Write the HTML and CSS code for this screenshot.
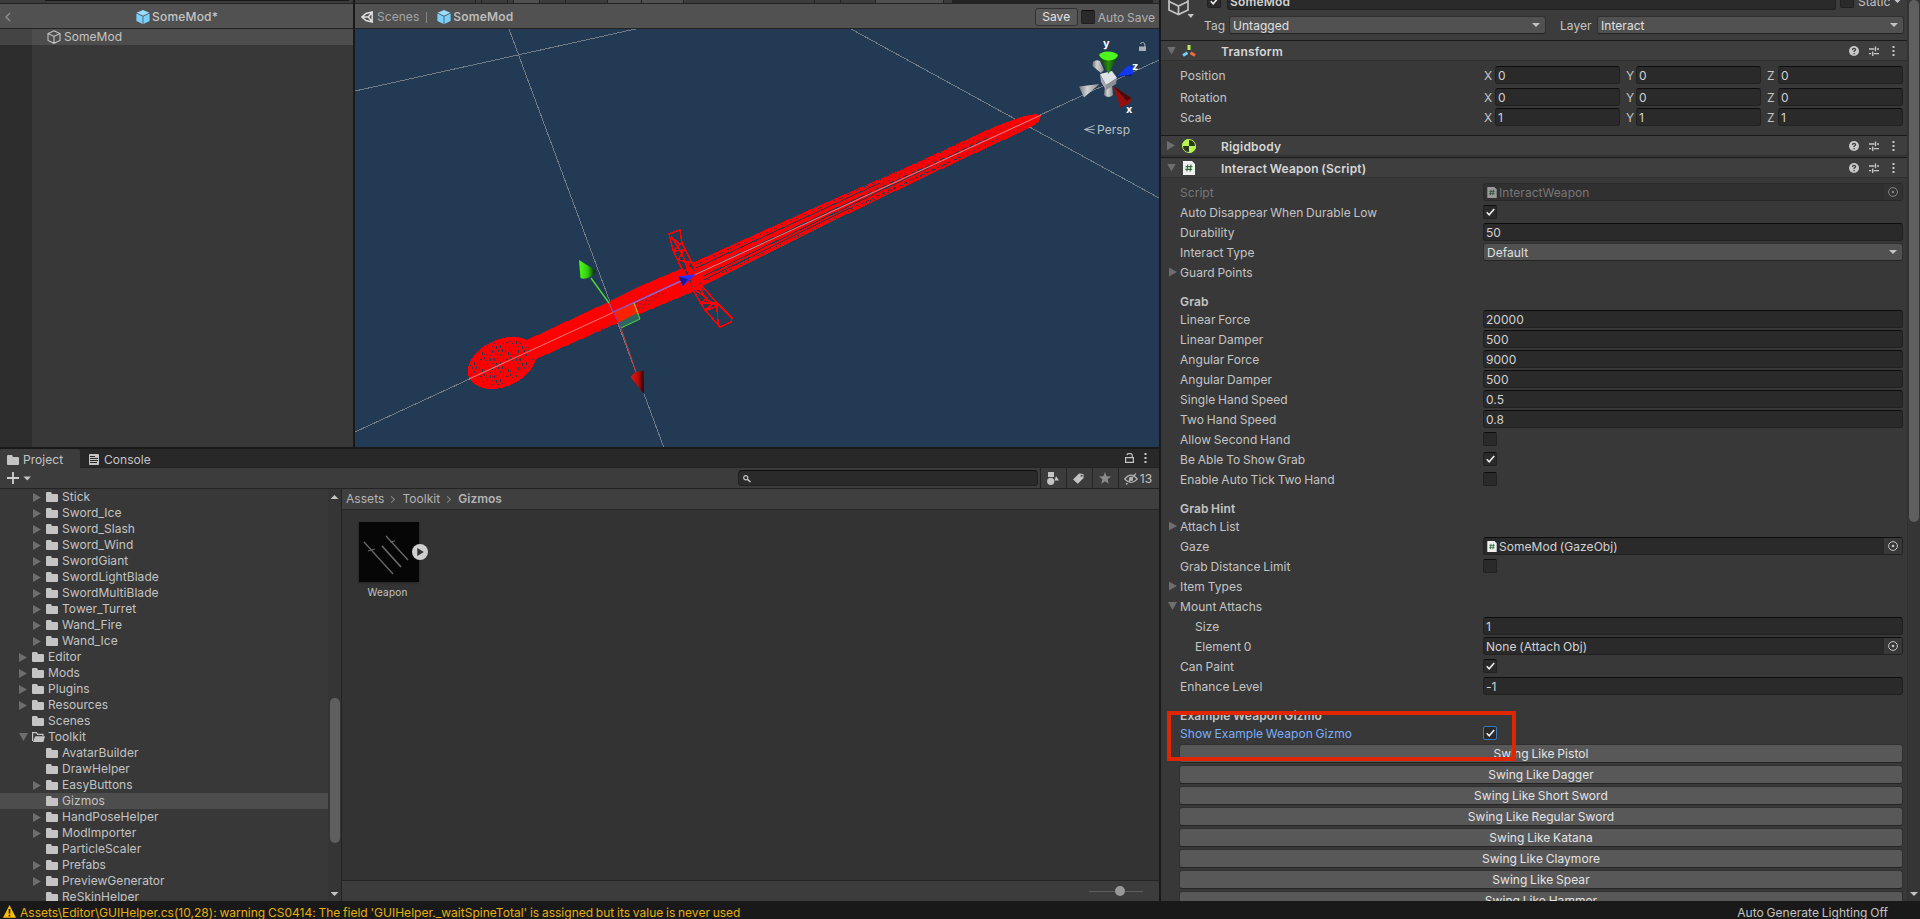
FILE: index.html
```html
<!DOCTYPE html>
<html lang="en">
<head>
<meta charset="utf-8">
<title>SomeMod</title>
<link rel="stylesheet" href="styles.css">
</head>
<body>
<svg class="defs" width="0" height="0">
  <defs>
    <symbol id="folder" viewBox="0 0 12 10"><path d="M0 1.2Q0 0 1 0H4.6Q5.4 0 5.6 1L5.8 2H11Q12 2 12 3V9Q12 10 11 10H1Q0 10 0 9Z" fill="#c4c4c4"/></symbol>
    <symbol id="folder-open" viewBox="0 0 13 10"><path d="M.6 9V.6H4.6L5.4 2.4H11V4" fill="none" stroke="#c4c4c4" stroke-width="1.2"/><path d="M3.2 4.2H13L11.4 10H1Z" fill="#c4c4c4"/></symbol>
    <symbol id="cube-blue" viewBox="0 0 14 14"><path d="M7 0L13.4 2.8 7 5.8 .6 2.8Z" fill="#9adcff"/><path d="M.4 3.6L6.6 6.5V14L.4 11ZM13.6 3.6L7.4 6.5V14L13.6 11Z" fill="#7bd0fb"/></symbol>
    <symbol id="cube" viewBox="0 0 14 14"><path d="M7 .8L13 3.6V10.4L7 13.3 1 10.4V3.6ZM1 3.6L7 6.4 13 3.6M7 6.4V13.3" fill="none" stroke="#c4c4c4" stroke-width="1.1"/></symbol>
    <symbol id="help" viewBox="0 0 10 10"><circle cx="5" cy="5" r="5" fill="#c8c8c8"/><path d="M3.4 3.9Q3.5 2.4 5 2.4T6.6 3.8Q6.6 4.6 5.1 5.1V6.1M5.1 7V8.2" fill="none" stroke="#3e3e3e" stroke-width="1.3"/></symbol>
    <symbol id="preset" viewBox="0 0 10 10"><path d="M0 3H5.4M8 3H10M6.5 .4V5.2M0 7.6H2.2M4.8 7.6H10M3.7 5.4V10" fill="none" stroke="#c8c8c8" stroke-width="1.3"/></symbol>
    <symbol id="dots" viewBox="0 0 3 10"><path d="M.5 0H2.5V2H.5ZM.5 4H2.5V6H.5ZM.5 8H2.5V10H.5Z" fill="#c8c8c8"/></symbol>
    <symbol id="script" viewBox="0 0 12 14"><path d="M0 0H9L12 3V14H0Z" fill="#f0f0f0"/><path d="M4.8 3.5L3.9 10.5M8 3.5L7.1 10.5M2.6 5.6H9.4M2.3 8.4H9.1" fill="none" stroke="#2a6b35" stroke-width="1.1"/></symbol>
    <symbol id="target" viewBox="0 0 10 10"><circle cx="5" cy="5" r="4.4" fill="none" stroke="#c4c4c4"/><circle cx="5" cy="5" r="1.3" fill="#c4c4c4"/></symbol>
    <symbol id="lock" viewBox="0 0 9 10"><path d="M.6 4.6H8.4V9.4H.6ZM2 2.2Q2 .6 3.6 .6H5.6Q7.2 .6 7.2 2.2V4.6" fill="none" stroke="#c4c4c4" stroke-width="1.2"/></symbol>
    <pattern id="speck" width="7" height="5" patternUnits="userSpaceOnUse" patternTransform="rotate(-30)"><path d="M0 0H1V2H0ZM3 2H4V4H3ZM5 0H6V1H5Z" fill="#233a54"/></pattern>
    <pattern id="mesh" width="13" height="17" patternUnits="userSpaceOnUse"><path d="M0 1H1V4H0ZM3 0H4V2H3ZM2 6H3V9H2ZM5 3H6V4H5ZM6 5H7V8H6ZM9 1H10V4H9ZM11 6H12V7H11ZM8 9H9V12H8ZM4 10H5V12H4ZM1 12H2V15H1ZM11 10H12V13H11ZM6 14H7V16H6ZM9 15H10V16H9ZM3 14H4V15H3ZM12 2H13V3H12Z" fill="#233a54"/></pattern>
    <linearGradient id="g-green"><stop offset="0" stop-color="#4dff1c"/><stop offset=".55" stop-color="#35c80c"/><stop offset="1" stop-color="#052604"/></linearGradient>
    <linearGradient id="g-red"><stop offset="0" stop-color="#ee1410"/><stop offset=".6" stop-color="#b00c0a"/><stop offset="1" stop-color="#260404"/></linearGradient>
    <linearGradient id="g-white"><stop offset="0" stop-color="#77797b"/><stop offset=".4" stop-color="#d0d2d4"/><stop offset="1" stop-color="#8a8c8f"/></linearGradient>
    <linearGradient id="g-dgreen"><stop offset="0" stop-color="#0c3a04"/><stop offset=".5" stop-color="#2b8a10"/><stop offset="1" stop-color="#0d3a05"/></linearGradient>
  </defs>
</svg>

<div class="editor">
  <div class="main">
    <div class="top">
      <section class="hierarchy">
        <div class="strip"><i class="strip-field"></i></div>
        <header class="bar">
          <svg class="back" width="6" height="10" viewBox="0 0 6 10"><path d="M5 1L1 5 5 9" fill="none" stroke="#8f8f8f" stroke-width="1.4"/></svg>
          <svg class="ico14"><use href="#cube-blue"/></svg><b>SomeMod*</b>
        </header>
        <div class="hier-body">
          <div class="hier-row"><svg class="ico14"><use href="#cube"/></svg><span>SomeMod</span></div>
        </div>
      </section>

      <section class="scene">
        <div class="strip scene-strip"></div>
        <header class="bar scene-bar">
          <svg width="12" height="12" viewBox="0 0 12 12"><path d="M11.2 1V11L5 9.6.8 6 5 2.4ZM1 6H7.2L11 1.4M7.2 6L11 10.6" fill="none" stroke="#dedede" stroke-width="1.5"/></svg>
          <span class="dim">Scenes</span><i class="pipe"></i>
          <svg class="ico14"><use href="#cube-blue"/></svg><b class="dimb">SomeMod</b>
          <button class="save">Save</button><i class="check big"></i><span class="autosave">Auto Save</span>
        </header>
        <svg class="view" width="804" height="419" viewBox="355 29 804 419">
          <g stroke="#717b86" stroke-width="1" fill="none" shape-rendering="crispEdges">
            <path d="M509 29L664 448M355 91L640 28M851 29L1159 198M355 432L1159 60"/>
          </g>
          <g shape-rendering="crispEdges">
            <g fill="#f00">
              <ellipse cx="502" cy="363" rx="36" ry="23.5" transform="rotate(-24 502 363)"/>
              <path d="M520 343L529 339 606 303 638 287 683 268 697 290 618 323 536 359Z"/>
              <path d="M690 264L816 207 907 167 994 127 1021 117 1035 114 1041 115 1039 122 1025 130 954 163 835 220 709 283 696 288Z"/>
            </g>
            <path d="M470 366Q476 350 490 344L516 340 526 346 534 358Q528 372 512 380 490 390 478 382 468 376 470 366Z" fill="url(#mesh)"/>
            <path d="M575 366L572 363 600 347 606 352ZM630 310L632 302 660 288 665 294 640 311ZM585 335L615 322 618 327 585 345Z" fill="url(#speck)" opacity=".7"/>
            <path d="M870 184L994 129 1030 119 1030 126 954 161 850 211Z" fill="url(#speck)" opacity=".45"/>
            <g fill="none" stroke="#233a54" stroke-width="1">
              <path d="M696 268L880 183M698 273L860 197"/>
              <path d="M704 276L930 167M704 280L850 208"/>
              <path d="M695 265L960 143" stroke-dasharray="1 2"/>
              <path d="M708 280L1000 138" stroke-dasharray="1 3"/>
              <path d="M860 197L990 137" stroke-dasharray="5 3"/>
              <path d="M850 209L960 157" stroke-dasharray="3 3"/>
            </g>
            <path d="M670 236L680 232 683 244 694 266 704 287 717 304 731 319 720 326 705 310 694 290 683 267 674 250Z" fill="#233a54"/>
            <path d="M684 262L696 272 703 290 694 290Z" fill="#f00"/>
            <path d="M669 234L680 230 682 243 693 265 703 287 717 303 732 318 731 322 720 327 705 310 693 290 681 267 673 250ZM671 237L680 244 674 251 684 250 678 260 690 262 686 270 697 274M673 239L681 252 692 276M695 290L707 298 701 303 713 303 705 311 717 306 718 324M700 289L707 300 717 305" fill="none" stroke="#f00" stroke-width="1.6"/>
          </g>
          <path d="M469 379L1041 115" stroke="#e47880" stroke-width="1.1"/>
          <path d="M613 312L634 303 640 319 621 328Z" fill="#ff2600" fill-opacity=".9"/>
          <path d="M618 323L637 313 640 319 621 328Z" fill="#2c665c"/>
          <path d="M634 303L640 319 621 328" fill="none" stroke="#4edb3c"/>
          <path d="M634 303L638 314" stroke="#c6b320"/>
          <path d="M591 278L609 303" stroke="#4edb3c" stroke-width="1.3"/><path d="M609 303L613 312" stroke="#c78b6a"/>
          <path d="M613 312L680 281" stroke="#7655e8" stroke-width="1.3"/>
          <path d="M609 303L621 328" stroke="#8c37b0"/>
          <path d="M621 328L636 372" stroke="#c43838"/>
          <path d="M579 260L595 270Q596 274 590 277T580.5 278Z" fill="url(#g-green)"/>
          <path d="M630.6 377Q635 370 643.6 371L644 394Z" fill="url(#g-red)"/>
          <path d="M696 274L678.500 276.500 683 286Z" fill="#2b2fff"/><path d="M678.500 276.500L688 279 683 286Z" fill="#171a99"/>
          <g class="gizmo">
            <path d="M1093 62Q1096 59 1100 61L1104 70 1101 73 1092.500 66Z" fill="url(#g-white)"/>
            <path d="M1079 86.500L1099.500 84 1084 97.500Z" fill="url(#g-white)"/>
            <path d="M1105 85H1112L1113 95Q1108.500 99 1104 95Z" fill="url(#g-white)"/>
            <path d="M1100 74L1112 71 1117 78 1106 85Z" fill="#dfe2e8"/>
            <path d="M1100 74L1106 85 1106 90 1101 82Z" fill="#a6a9ae"/><path d="M1106 85L1117 78 1116 84 1106 90Z" fill="#8b8e93"/>
            <path d="M1099.500 57L1108.500 74 1117.500 57Z" fill="url(#g-dgreen)"/><path d="M1099 55Q1101 51.500 1108 51.500T1118 55Q1117 60 1108.500 60.500 1101 60 1099 55Z" fill="#4ef41e"/>
            <path d="M1117 76.500L1128 65.500 1133.500 67 1133 74Z" fill="#1238f5"/><path d="M1117 76.500L1133 74 1131 76Z" fill="#0c1f86"/>
            <path d="M1113 86L1131.500 98 1130 103 1120.500 107.500Z" fill="#95100c"/><path d="M1113 86L1131.500 98 1127 101Z" fill="#4a0a0c"/>
            <g class="axis"><text x="1103" y="47">y</text><text x="1132" y="70">z</text><text x="1126" y="113">x</text></g>
            <path d="M1139 46.500H1146V51H1139Z" fill="#a9b0b4"/><path d="M1140.500 44Q1140.500 42.500 1142.500 42.500T1144.800 44V47" fill="none" stroke="#a9b0b4"/>
            <path d="M1094.500 125.500L1084.500 129.500 1094.500 133.500M1084.500 129.500H1094.500" fill="none" stroke="#aeb5bb"/>
            <text class="persp" x="1097" y="134">Persp</text>
          </g>
        </svg>
      </section>
    </div>

    <section class="project">
      <div class="tabs">
        <div class="tab active"><svg width="12" height="10"><use href="#folder"/></svg>Project</div>
        <div class="tab"><svg width="10" height="11" viewBox="0 0 10 11"><rect width="10" height="11" rx="1" fill="#c4c4c4"/><path d="M1 2.500H6M1 4.500H9M1 6.500H9M1 8.500H8" stroke="#282828"/></svg><span>Console</span></div>
        <div class="tab-tools"><svg width="9" height="10"><use href="#lock"/></svg><svg width="3" height="10"><use href="#dots"/></svg></div>
      </div>
      <div class="tools">
        <svg class="plus" width="25" height="12" viewBox="0 0 25 12"><path d="M6 0V12M0 6H12" stroke="#d0d0d0" stroke-width="1.800"/><path d="M16.500 4.500H24L20.200 8.500Z" fill="#c4c4c4"/></svg>
        <div class="search"><svg width="8" height="8" viewBox="0 0 8 8"><circle cx="2.800" cy="2.800" r="2.100" fill="none" stroke="#c4c4c4" stroke-width="1.200"/><path d="M4.400 4.400L7.500 7" stroke="#c4c4c4" stroke-width="1.500"/></svg></div>
        <div class="tbtn"><svg width="12" height="13" viewBox="0 0 12 13"><path d="M1 0H7V5H1ZM7.500 8.500L9 4 12 8.500Z" fill="#c4c4c4"/><circle cx="3.700" cy="9.300" r="3.600" fill="#c4c4c4"/></svg></div>
        <div class="tbtn"><svg class="tag-ico" width="11" height="11" viewBox="0 0 11 11"><path d="M6 .5L10.500 1 10.600 5 4.800 10.800 0 6.400Z" fill="#c4c4c4"/><circle cx="8.600" cy="2.700" r="1" fill="#3c3c3c"/></svg></div>
        <div class="tbtn"><svg class="star" width="12" height="12" viewBox="0 0 12 12"><path d="M6 0L7.600 4.200 12 4.500 8.600 7.300 9.700 11.700 6 9.300 2.300 11.700 3.400 7.300 0 4.500 4.400 4.200Z" fill="#8b8b8b"/></svg></div>
        <div class="tbtn wide"><svg width="14" height="12" viewBox="0 0 14 12"><path d="M.7 6Q7-1.600 13.300 6 7 13 .7 6ZM2 11.500L12 .5" fill="none" stroke="#b0b0b0" stroke-width="1.200"/><circle cx="7" cy="6" r="2.200" fill="#b0b0b0"/></svg><span>13</span></div>
      </div>
      <div class="project-body">
        <div class="tree" id="tree"></div>
        <div class="scroll"><i class="up"></i><i class="thumb"></i><i class="down"></i></div>
        <div class="assets">
          <div class="crumbs"><span>Assets</span><i class="chev"></i><span>Toolkit</span><i class="chev"></i><b>Gizmos</b></div>
          <div class="grid">
            <div class="asset">
              <div class="thumbnail"><svg width="60" height="60" viewBox="0 0 60 60"><g fill="none" stroke="#686868"><path d="M5 20L34 52M27 14L49 38" stroke-width="1.300"/><path d="M23 24L42 45" stroke-width="1.800"/><path d="M9 29L16 27M31 20L36 19"/></g></svg>
                <svg class="play" width="18" height="18" viewBox="0 0 18 18"><circle cx="9" cy="9" r="8" fill="#cfcfcf"/><path d="M6.300 5V13L12.800 9Z" fill="#333"/></svg></div>
              <span>Weapon</span>
            </div>
          </div>
          <div class="footer"><i class="slider"><i class="knob"></i></i></div>
        </div>
      </div>
    </section>
  </div>

  <section class="inspector">
    <div class="insp-body">
      <div class="object">
        <svg class="objcube" width="24" height="20" viewBox="0 0 24 20"><path d="M1 -1V10L10.500 14.500 20 10V-1M1 1.500L10.500 6 20 1.500M10.500 6V14" fill="none" stroke="#c4c4c4" stroke-width="1.700"/><path d="M19.500 14H26L22.800 18Z" fill="#c4c4c4"/></svg>
        <div class="objrows">
          <div class="name-row"><i class="check on"><svg width="9" height="8" viewBox="0 0 9 8"><path d="M.8 4.200L3.200 6.700 8.200 1" fill="none" stroke="#eee" stroke-width="1.600"/></svg></i><div class="field name"><b>SomeMod</b></div><i class="check"></i><span>Static</span><i class="caret"></i></div>
          <div class="tag-row"><span>Tag</span><div class="select tag">Untagged<i class="caret"></i></div><span class="layer">Layer</span><div class="select lay">Interact<i class="caret"></i></div></div>
        </div>
      </div>
      <div id="inspector"></div>
      <div class="highlight"></div>
    </div>
    <div class="insp-scroll"><i class="thumb"></i><i class="down"></i></div>
  </section>
</div>
<footer class="status">
  <svg width="13" height="13" viewBox="0 0 13 13"><path d="M6.500 0L13 12.800H0Z" fill="#f7bd0a"/><path d="M6.500 4V8.500M6.500 9.800V11.500" stroke="#191919" stroke-width="1.600"/></svg>
  <span class="warn">Assets\Editor\GUIHelper.cs(10,28): warning CS0414: The field 'GUIHelper._waitSpineTotal' is assigned but its value is never used</span>
  <span class="lighting">Auto Generate Lighting Off</span>
</footer>
<script src="app.js"></script>
</body>
</html>
```
FILE: styles.css
```css
* { box-sizing: border-box; }
body { margin: 0; width: 1920px; height: 919px; overflow: hidden; background: #191919; color: #c4c4c4; font: 12px/16px Inter, "Liberation Sans", sans-serif; letter-spacing: .05px; word-spacing: -.7px; display: flex; flex-direction: column; white-space: nowrap; }
b { font-weight: 600; letter-spacing: .2px; }
i { display: block; flex: none; }
svg { display: block; flex: none; }
.defs { position: absolute; }
.ico14 { width: 14px; height: 14px; }
.editor { display: flex; height: 901px; }
.main { width: 1159px; margin-right: 2px; display: flex; flex-direction: column; }
.top { display: flex; height: 447px; gap: 2px; margin-bottom: 2px; }
.hierarchy { width: 353px; background: #383838; display: flex; flex-direction: column; }
.scene { width: 804px; display: flex; flex-direction: column; overflow: hidden; }
.strip { height: 4px; background: #3c3c3c; border-bottom: 1px solid #232323; flex: none; }
.strip-field { width: 304px; height: 1px; margin-left: 45px; background: #191919; }
.scene-strip { background: linear-gradient(90deg, #3c3c3c 120px, #232323 120px 121px, #3c3c3c 121px 126px, #232323 126px 127px, #3c3c3c 127px 152px, #232323 152px 153px, #3c3c3c 153px 158px, #232323 158px 159px, #505050 159px 184px, #232323 184px 185px, #3c3c3c 185px 210px, #232323 210px 211px, #3c3c3c 211px 252px, #232323 252px 253px, #505050 253px 286px, #232323 286px 287px, #505050 287px 328px, #232323 328px 329px, #3c3c3c 329px 459px, #232323 459px 460px, #3c3c3c 460px 485px, #232323 485px 486px, #3c3c3c 486px 520px, #232323 520px 521px, #505050 521px 588px, #232323 588px 589px, #3c3c3c 589px 597px, #232323 597px 798px, #3c3c3c 798px); }
.bar { height: 25px; flex: none; background: #515151; border-bottom: 1px solid #232323; display: flex; align-items: center; padding-top: 2px; }
.hierarchy .bar { gap: 2px; }
.hierarchy .bar b { font-weight: 500; }
.back { margin: 0 123px 0 5px; }
.hier-body { flex: 1; border-left: 32px solid #2d2d2d; }
.hier-row { height: 16px; margin-left: -32px; padding-left: 47px; background: linear-gradient(90deg, #444 32px, #4d4d4d 32px); display: flex; align-items: center; gap: 3px; }
.scene-bar { padding-left: 6px; }
.dim { color: #a5a5a5; margin-left: 4px; }
.dimb { color: #bcbcbc; margin-left: 2px; }
.pipe { width: 1px; height: 11px; background: #858585; margin: 0 10px 0 7px; }
.save { font: inherit; letter-spacing: inherit; color: #e4e4e4; background: #585858; border: 1px solid #303030; border-radius: 3px; width: 43px; height: 18px; padding: 0; line-height: 15px; margin: -1px 3px 0 auto; }
.check { width: 14px; height: 14px; background: #2a2a2a; border: 1px solid #212121; border-top-color: #0d0d0d; border-radius: 2px; display: flex; align-items: center; justify-content: center; }
.autosave { color: #b2b2b2; margin: 2px 4px 0 3px; }
.view { background: #233a54; }
.axis text { font-weight: 700; fill: #fff; font-size: 11px; }
.persp { fill: #bac1c7; }

.project { height: 452px; display: flex; flex-direction: column; background: #383838; }
.tabs { height: 19px; background: #282828; border-bottom: 1px solid #232323; display: flex; flex: none; }
.tab { display: flex; align-items: center; gap: 5px; padding: 2px 9px 0; height: 18px; }
.tab span { padding-top: 1px; }
.tab.active { width: 80px; background: #3c3c3c; height: 19px; padding-left: 7px; gap: 4px; border-radius: 2px 2px 0 0; }
.tab-tools { margin-left: auto; display: flex; align-items: center; gap: 10px; padding-right: 12px; }
.tools { height: 21px; background: #3c3c3c; border-bottom: 1px solid #232323; display: flex; align-items: center; flex: none; }
.plus { margin-left: 7px; }
.search { margin-left: auto; width: 300px; height: 16px; border: 1px solid #212121; border-top-color: #0d0d0d; border-radius: 4px; background: #2a2a2a; margin-right: 2px; padding: 4px; }
.tbtn { width: 26px; height: 20px; border-left: 1px solid #232323; display: flex; align-items: center; justify-content: center; }
.tbtn svg { margin-left: -2px; }
.tbtn .star { margin-left: -1px; }
.tbtn.wide { width: 41px; gap: 2px; padding-top: 1px; }
.project-body { display: flex; flex: 1; min-height: 0; }
.tree { width: 328px; overflow: hidden; }
.node { height: 16px; display: flex; align-items: center; }
.node.sel { background: #4d4d4d; }
.node svg { margin-right: 4px; }
.node svg.open { margin-right: 3px; }
.arrow { width: 13px; height: 9px; margin-top: 1px; }
.arrow.right::before, .fold.right::before { content: ""; display: block; width: 8px; height: 9px; background: #6e6e6e; clip-path: polygon(0 0, 100% 50%, 0 100%); }
.arrow.expanded::before, .fold.expanded::before { content: ""; display: block; width: 9px; height: 8px; background: #6e6e6e; clip-path: polygon(0 0, 100% 0, 50% 100%); }
.scroll { width: 14px; border-right: 1px solid #232323; background: #353535; display: flex; flex-direction: column; align-items: center; padding: 6px 0 5px; }
.up { width: 8px; height: 4px; background: #c4c4c4; clip-path: polygon(50% 0, 100% 100%, 0 100%); }
.down, .caret { width: 8px; height: 4px; background: #c4c4c4; clip-path: polygon(0 0, 100% 0, 50% 100%); }
.scroll .thumb { width: 10px; height: 145px; border-radius: 5px; background: #5f5f5f; margin-top: 199px; }
.scroll .down { margin-top: auto; }
.assets { flex: 1; background: #333; display: flex; flex-direction: column; }
.crumbs { height: 21px; background: #3f3f3f; border-bottom: 1px solid #282828; display: flex; align-items: center; padding: 0 0 1px 4px; color: #b4b4b4; }
.crumbs b { letter-spacing: 0; }
.chev { width: 5px; height: 5px; border: solid #888; border-width: 1.5px 1.5px 0 0; transform: rotate(45deg); margin: 1px 8px 0 5px; }
.grid { flex: 1; padding: 12px 17px; }
.asset { width: 60px; font-size: 10px; letter-spacing: .2px; display: flex; flex-direction: column; align-items: center; gap: 2px; }
.asset span { margin-left: -3px; }
.thumbnail { position: relative; width: 60px; height: 60px; background: #060606; box-shadow: 0 1px 2px #222; }
.play { position: absolute; left: 52px; top: 21px; }
.footer { height: 21px; background: #3c3c3c; border-top: 1px solid #232323; display: flex; align-items: center; justify-content: flex-end; padding-right: 16px; }
.slider { width: 54px; height: 1px; background: #5e5e5e; display: flex; align-items: center; }
.knob { width: 10px; height: 10px; border-radius: 50%; background: #999; margin-left: 26px; }

.inspector { width: 759px; display: flex; background: #383838; }
.insp-body { width: 746px; height: 901px; overflow: hidden; position: relative; }
.insp-scroll { width: 13px; border-left: 1px solid #303030; background: #353535; display: flex; flex-direction: column; align-items: center; justify-content: space-between; padding-bottom: 5px; }
.insp-scroll .thumb { width: 10px; height: 522px; background: #5f5f5f; border-radius: 5px; }
.object { height: 40px; background: #3c3c3c; display: flex; overflow: hidden; }
.objcube { margin: 0 0 0 7px; overflow: visible; }
.objrows { flex: 1; }
.name-row { display: flex; margin-top: -8px; height: 18px; margin-left: 15px; align-items: center; }
.name-row .name { flex: none; width: 609px; margin: 0 4px 0 6px; }
.name-row .check { margin-top: 0; }
.name-row span { margin: 0 3px 0 4px; padding-top: 2px; }
.tag-row { display: flex; margin: 6px 0 0 12px; align-items: center; height: 18px; }
.tag-row > span { width: 25px; padding-top: 1px; }
.tag-row > .layer { margin-left: 14px; width: 37px; }
.select { height: 18px; flex: 1; background: #515151; border: 1px solid #303030; border-bottom-color: #242424; border-radius: 3px; padding: 0 5px 0 3px; color: #e0e0e0; line-height: 15px; display: flex; justify-content: space-between; align-items: center; }
.select.tag { flex: none; width: 317px; }
.select.lay { flex: none; width: 307px; }
.field { height: 18px; flex: 1; background: #2a2a2a; border: 1px solid #212121; border-top-color: #0d0d0d; border-radius: 3px; padding: 2px 2px 0; color: #d2d2d2; display: flex; align-items: center; line-height: 16px; }
.comp { height: 21px; background: #3e3e3e; border-top: 1px solid #1a1a1a; border-bottom: 1px solid #303030; display: flex; align-items: center; padding: 0 12px 0 6px; gap: 10px; }
.comp .ci { width: 14px; height: 14px; margin-left: -5px; }
.comp .fold { width: 9px; margin: 0 1px 0 0; }
.comp b { margin-left: 15px; flex: 1; color: #d6d6d6; padding-top: 3px; }
.row { display: flex; height: 18px; margin: 0 4px 2px 5px; align-items: center; }
.row .fold { width: 14px; padding-left: 3px; }
.row .fold.expanded { padding-left: 2px; }
.row label { width: 303px; flex: none; padding-top: 2px; }
.row.sub label { padding-left: 15px; }
.row.off { color: #777; }
.row.off .field { color: #777; background: #303030; border-color: #282828; }
.row.off .field > svg, .row.off .objpick svg { opacity: .55; }
.row.focus { color: #7baefa; }
.row.focus .check { border-color: #3a79bb; }
.head { height: 18px; margin-left: 19px; padding-top: 2px; font-weight: 600; letter-spacing: .15px; }
.field.obj { padding-right: 0; }
.objpick { margin: -2px 0 0 auto; width: 18px; height: 16px; background: #383838; display: flex; align-items: center; justify-content: center; }
.off .objpick { background: #333; }
.filei { margin: -1px 2px 0 1px; }
.xyz { display: grid; grid-template-columns: 12px 125px 16px 125px 17px 125px; align-items: center; }
.xyz span { padding: 2px 0 0 1px; }
.xyz .field + span { padding-left: 6px; }
.xyz .field { width: 125px; }
.btn { font: inherit; letter-spacing: inherit; word-spacing: inherit; color: #e4e4e4; background: #585858; border: 1px solid #303030; border-bottom-color: #242424; border-radius: 3px; width: 724px; height: 19px; margin: 0 0 2px 18px; padding: 0; line-height: 17px; display: block; text-align: center; }
.highlight { position: absolute; left: 6px; top: 711px; width: 349px; height: 50px; border: 4px solid #df2600; }
.status { height: 18px; background: #191919; display: flex; align-items: center; padding: 2px 32px 0 3px; gap: 4px; flex: none; }
.status span { padding-top: 3px; }
.warn { color: #e3b00d; letter-spacing: .02px; }
.lighting { margin-left: auto; }
```
FILE: app.js
```js
const use = (id, w, h, cls = '') => `<svg class="${cls}" width="${w}" height="${h}"><use href="#${id}"/></svg>`;

// Project tree: [depth, arrow, name]
const nodes = [
  [2, 'right', 'Stick'], [2, 'right', 'Sword_Ice'], [2, 'right', 'Sword_Slash'], [2, 'right', 'Sword_Wind'],
  [2, 'right', 'SwordGiant'], [2, 'right', 'SwordLightBlade'], [2, 'right', 'SwordMultiBlade'],
  [2, 'right', 'Tower_Turret'], [2, 'right', 'Wand_Fire'], [2, 'right', 'Wand_Ice'],
  [1, 'right', 'Editor'], [1, 'right', 'Mods'], [1, 'right', 'Plugins'], [1, 'right', 'Resources'],
  [1, '', 'Scenes'], [1, 'expanded', 'Toolkit'], [2, '', 'AvatarBuilder'], [2, '', 'DrawHelper'],
  [2, 'right', 'EasyButtons'], [2, '', 'Gizmos'], [2, 'right', 'HandPoseHelper'], [2, 'right', 'ModImporter'],
  [2, '', 'ParticleScaler'], [2, 'right', 'Prefabs'], [2, 'right', 'PreviewGenerator'], [2, '', 'ReSkinHelper']
];
document.getElementById('tree').innerHTML = nodes.map(([d, a, n]) =>
  `<div class="node${n === 'Gizmos' ? ' sel' : ''}" style="padding-left:${5 + d * 14}px"><i class="arrow ${a}"></i>${n === 'Toolkit' ? use('folder-open', 13, 10, 'open') : use('folder', 12, 10)}<span>${n}</span></div>`).join('');

const tick = '<svg width="9" height="8" viewBox="0 0 9 8"><path d="M.8 4.200L3.200 6.700 8.200 1" fill="none" stroke="#eee" stroke-width="1.600"/></svg>';
const comp = (fold, icon, name) => `<div class="comp"><i class="fold ${fold}"></i>${icon}<b>${name}</b>${use('help', 10, 10)}${use('preset', 10, 10)}<svg width="3" height="10" style="margin:0 0 0 3px"><use href="#dots"/></svg></div>`;
const row = (label, control = '', o = {}) => `<div class="row ${o.cls || ''}"><i class="fold ${o.fold || ''}"></i><label>${label}</label>${control}</div>`;
const field = v => `<div class="field">${v}</div>`;
const check = on => `<i class="check">${on ? tick : ''}</i>`;
const object = (v, file) => `<div class="field obj">${file ? use('script', 10, 11, 'filei') : ''}${v}<i class="objpick">${use('target', 10, 10)}</i></div>`;
const xyz = v => `<div class="xyz"><span>X</span>${field(v)}<span>Y</span>${field(v)}<span>Z</span>${field(v)}</div>`;
const gap = h => `<div style="height:${h}px"></div>`;
const head = t => `<div class="head">${t}</div>`;

const transformIcon = '<svg class="ci" viewBox="0 0 14 14"><path d="M7 1V6" stroke="#b2f24e" stroke-width="3"/><path d="M1 11.500L5.500 8.800" stroke="#74cdf8" stroke-width="3"/><path d="M13 11.500L8.500 8.800" stroke="#f26b3c" stroke-width="3"/></svg>';
const rigidIcon = '<svg class="ci" viewBox="0 0 14 14"><circle cx="7" cy="7" r="6.500" fill="#2c3520" stroke="#b4f54f"/><path d="M7 7V0A7 7 0 0 0 0 7ZM7 7V14A7 7 0 0 0 14 7Z" fill="#b4f54f"/></svg>';
const scriptIcon = use('script', 14, 14, 'ci');

document.getElementById('inspector').innerHTML = [
  comp('expanded', transformIcon, 'Transform'), gap(5),
  row('Position', xyz(0)), gap(2), row('Rotation', xyz(0)), row('Scale', xyz(1)), gap(7),
  comp('right', rigidIcon, 'Rigidbody'), gap(1),
  comp('expanded', scriptIcon, 'Interact Weapon (Script)'), gap(5),
  row('Script', object('InteractWeapon', true), { cls: 'off' }),
  row('Auto Disappear When Durable Low', check(true)),
  row('Durability', field(50)),
  row('Interact Type', '<div class="select">Default<i class="caret"></i></div>'),
  row('Guard Points', '', { fold: 'right' }), gap(9),
  head('Grab'),
  row('Linear Force', field(20000)), row('Linear Damper', field(500)),
  row('Angular Force', field(9000)), row('Angular Damper', field(500)),
  row('Single Hand Speed', field('0.5')), row('Two Hand Speed', field('0.8')),
  row('Allow Second Hand', check()), row('Be Able To Show Grab', check(true)), row('Enable Auto Tick Two Hand', check()), gap(9),
  head('Grab Hint'),
  row('Attach List', '', { fold: 'right' }),
  row('Gaze', object('SomeMod (GazeObj)', true)), row('Grab Distance Limit', check()),
  row('Item Types', '', { fold: 'right' }), row('Mount Attachs', '', { fold: 'expanded' }),
  row('Size', field(1), { cls: 'sub' }), row('Element 0', object('None (Attach Obj)'), { cls: 'sub' }),
  row('Can Paint', check(true)), row('Enhance Level', field('-1')), gap(9),
  head('Example Weapon Gizmo'),
  row('Show Example Weapon Gizmo', check(true), { cls: 'focus' }),
  ...['Pistol', 'Dagger', 'Short Sword', 'Regular Sword', 'Katana', 'Claymore', 'Spear', 'Hammer'].map(n => `<button class="btn"><span>Swing Like ${n}</span></button>`)
].join('');
```
